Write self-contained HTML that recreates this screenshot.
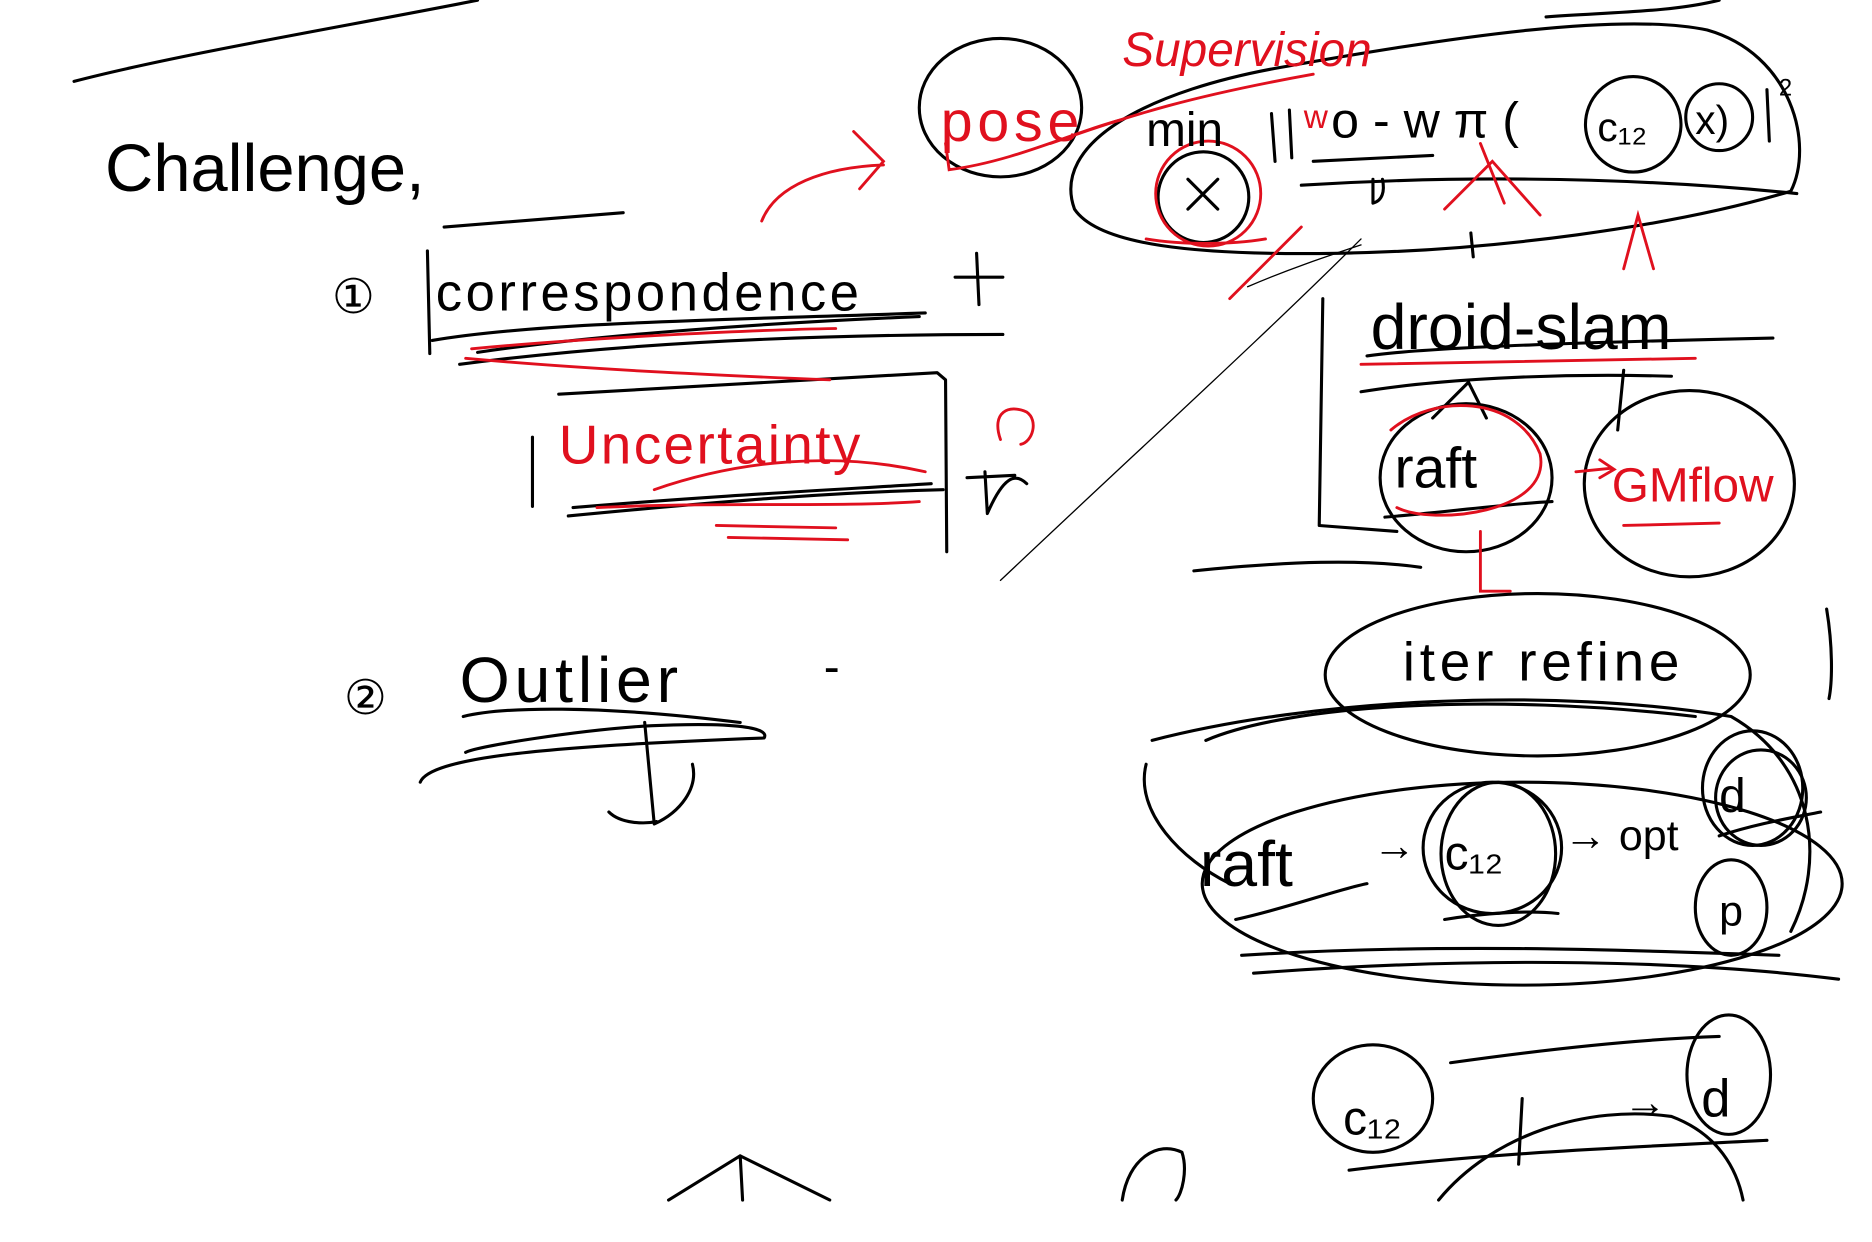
<!DOCTYPE html>
<html><head><meta charset="utf-8"><style>
html,body{margin:0;padding:0;background:#fff;width:1872px;height:1242px;overflow:hidden}
svg{display:block}
text{font-family:"Liberation Sans",sans-serif}
</style></head><body>
<svg width="1872" height="1242" viewBox="0 0 1568 1040" xmlns="http://www.w3.org/2000/svg">
<g fill="none" stroke="#000" stroke-width="2.6" stroke-linecap="round" stroke-linejoin="round">
<path d="M62 68 C150 45 300 20 400 0"/>
<path d="M1295 14 C1350 10 1400 10 1440 0"/>
<path d="M372 190 L522 178"/>
<path d="M358 210 L360 296"/>
<path d="M362 285 C450 270 600 268 775 262"/>
<path d="M385 305 C500 290 650 280 840 280"/>
<path d="M400 295 C500 280 650 270 770 265"/>
<path d="M800 232 L840 232 M818 212 L820 255"/>
<path d="M468 330 C600 322 720 315 785 312 L792 318 L793 462"/>
<path d="M446 366 L446 424"/>
<path d="M476 432 C600 420 700 412 790 410"/>
<path d="M480 425 C600 415 700 410 780 405"/>
<path d="M810 400 L850 398 M825 395 L827 430 C840 400 850 395 860 405"/>
<path d="M352 655 C360 635 450 625 640 618 C645 610 620 604 540 608 C480 612 400 625 390 630"/>
<path d="M540 605 L548 690 C570 680 585 660 580 640"/>
<path d="M510 680 C520 690 540 690 550 688"/>
<path d="M388 600 C420 592 500 590 620 605"/>
<path d="M560 1005 L620 968 L695 1005 M620 968 L622 1005"/>
<path d="M838 486 C950 380 1060 280 1140 200" stroke-width="1.1"/>
<path d="M1045 240 C1080 225 1110 215 1140 205" stroke-width="1.1"/>
<path d="M940 1005 C945 970 970 955 990 965 C995 980 990 1000 985 1005"/>
<ellipse cx="838" cy="90" rx="68" ry="58"/>
<path d="M900 175 C880 120 960 75 1080 55 C1220 30 1360 10 1430 25 C1500 45 1520 120 1500 160 C1400 190 1250 210 1120 212 C1000 214 920 205 900 175"/>
<path d="M1090 155 C1200 148 1350 146 1505 162"/>
<path d="M1100 135 L1200 130"/>
<circle cx="1008" cy="165" r="38"/>
<path d="M995 150 L1020 175 M1020 150 L995 175"/>
<circle cx="1368" cy="104" r="40"/>
<circle cx="1440" cy="98" r="28"/>
<path d="M1065 95 L1068 135 M1080 92 L1082 132"/>
<path d="M1480 75 L1482 118"/>
<path d="M1150 150 L1150 170 C1158 168 1160 160 1158 150"/>
<path d="M1232 195 L1234 215"/>
<path d="M1108 250 L1105 440 L1170 445"/>
<path d="M1145 298 C1200 290 1350 286 1485 283"/>
<path d="M1140 328 C1200 318 1300 312 1400 315"/>
<ellipse cx="1228" cy="400" rx="72" ry="62"/>
<path d="M1160 433 C1220 428 1260 422 1300 420"/>
<path d="M1200 350 L1230 320 L1245 350"/>
<ellipse cx="1415" cy="405" rx="88" ry="78"/>
<path d="M1360 310 L1355 360"/>
<path d="M1000 478 C1080 470 1140 468 1190 475"/>
<ellipse cx="1288" cy="565" rx="178" ry="68"/>
<path d="M1010 620 C1080 590 1250 580 1420 600"/>
<path d="M965 620 C1100 585 1300 575 1450 600 C1520 640 1530 720 1500 780"/>
<ellipse cx="1275" cy="740" rx="268" ry="85"/>
<path d="M1050 815 C1250 800 1420 805 1540 820"/>
<path d="M1040 800 C1200 790 1350 795 1490 800"/>
<path d="M960 640 C950 680 990 720 1030 740"/>
<ellipse cx="1250" cy="710" rx="58" ry="55"/>
<ellipse cx="1255" cy="715" rx="48" ry="60"/>
<ellipse cx="1468" cy="660" rx="42" ry="48"/>
<ellipse cx="1475" cy="668" rx="38" ry="40"/>
<ellipse cx="1450" cy="760" rx="30" ry="40"/>
<path d="M1440 700 C1470 690 1500 685 1525 680"/>
<path d="M1035 770 C1080 760 1120 745 1145 740"/>
<path d="M1210 770 C1240 765 1280 762 1305 765"/>
<path d="M1530 510 C1535 540 1535 570 1532 585"/>
<ellipse cx="1150" cy="920" rx="50" ry="45"/>
<ellipse cx="1448" cy="900" rx="35" ry="50"/>
<path d="M1215 890 C1300 878 1380 870 1440 868"/>
<path d="M1205 1005 C1250 950 1330 925 1400 935 C1440 950 1455 980 1460 1005"/>
<path d="M1130 980 C1250 965 1380 960 1480 955"/>
<path d="M1275 920 L1272 975"/>
</g>
<g fill="none" stroke="#e0101e" stroke-width="2.4" stroke-linecap="round">
<path d="M638 185 C650 155 690 140 740 138 M715 110 L740 135 L720 158"/>
<path d="M395 292 C500 282 640 276 700 275"/>
<path d="M390 300 C500 310 620 315 695 318"/>
<path d="M548 410 C620 385 700 378 775 395"/>
<path d="M500 425 C600 420 700 425 770 420"/>
<path d="M600 440 L700 442 M610 450 L710 452"/>
<path d="M838 368 C830 345 845 338 860 345 C870 352 865 370 855 372"/>
<path d="M792 120 L795 142 C850 135 900 110 940 100"/>
<path d="M880 120 C950 95 1000 80 1100 62"/>
<path d="M960 200 C990 205 1030 205 1060 200"/>
<circle cx="1012" cy="162" r="44"/>
<path d="M1210 175 L1250 135 L1290 180 M1240 120 L1260 170"/>
<path d="M1360 225 L1372 180 L1385 225"/>
<path d="M1140 305 L1420 300"/>
<path d="M1165 360 C1200 330 1270 330 1290 380 C1300 430 1200 440 1170 425"/>
<path d="M1240 445 L1240 495 L1265 495"/>
<path d="M1320 395 L1350 392 M1340 385 L1352 393 L1340 400"/>
<path d="M1360 440 L1440 438"/>
<path d="M1030 250 L1090 190"/>
</g>
<g font-size="52" fill="#000">
<text x="88" y="160" font-size="56">Challenge,</text>
<text x="278" y="262" font-size="40">①</text>
<text x="365" y="260" font-size="44" letter-spacing="3">correspondence</text>
<text x="288" y="598" font-size="40">②</text>
<text x="385" y="588" font-size="54" letter-spacing="4">Outlier</text>
<text x="690" y="572" font-size="40">-</text>
<text x="960" y="122" font-size="40">min</text>
<text x="1115" y="115" font-size="42">o - w π (</text>
<text x="1338" y="118" font-size="34">c₁₂</text>
<text x="1420" y="112" font-size="34">x)</text>
<text x="1490" y="80" font-size="20">2</text>
<text x="1148" y="292" font-size="54">droid-slam</text>
<text x="1168" y="408" font-size="48">raft</text>
<text x="1175" y="570" font-size="46" letter-spacing="4">iter refine</text>
<text x="1005" y="742" font-size="54">raft</text>
<text x="1150" y="720" font-size="36">→</text>
<text x="1210" y="728" font-size="40">c₁₂</text>
<text x="1310" y="712" font-size="36">→ opt</text>
<text x="1440" y="680" font-size="40">d</text>
<text x="1440" y="775" font-size="36">p</text>
<text x="1125" y="950" font-size="40">c₁₂</text>
<text x="1360" y="935" font-size="36">→</text>
<text x="1425" y="935" font-size="44">d</text>
</g>
<g fill="#e0101e">
<text x="940" y="55" font-size="40" font-style="italic">Supervision</text>
<text x="788" y="118" font-size="48" letter-spacing="4">pose</text>
<text x="468" y="388" font-size="46" letter-spacing="2">Uncertainty</text>
<text x="1350" y="420" font-size="40">GMflow</text>
<text x="1092" y="107" font-size="28">w</text>
</g>
</svg>
</body></html>
